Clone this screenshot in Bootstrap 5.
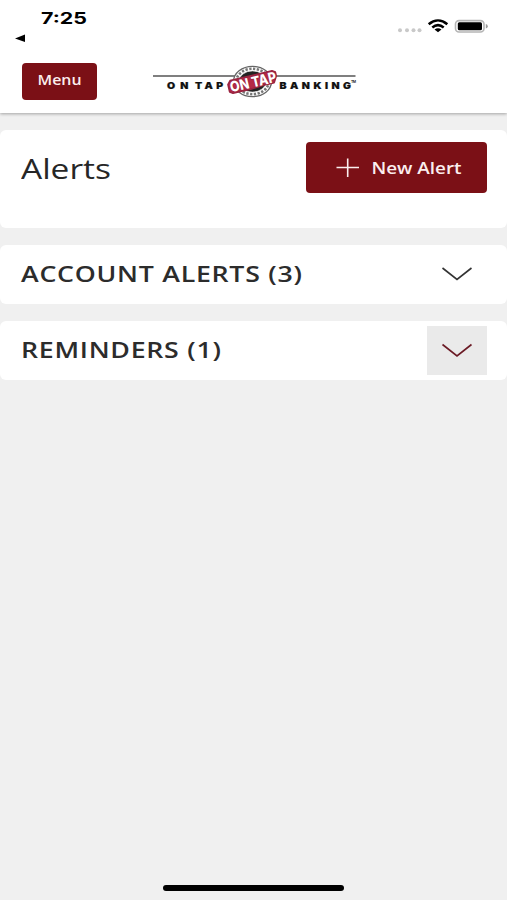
<!DOCTYPE html>
<html lang="en">
<head>
<meta charset="utf-8">
<meta name="viewport" content="width=device-width, initial-scale=1">
<title>Alerts</title>
<link href="https://cdn.jsdelivr.net/npm/bootstrap@5.3.0/dist/css/bootstrap.min.css" rel="stylesheet">
<style>
  body { background: #f0f0f0; font-family: "Open Sans", "Noto Sans", sans-serif; color: #262626; height: 900px; overflow: hidden; }
  .app-head { height: 113px; box-shadow: 0 1px 3px rgba(0,0,0,.32); }
  .status-row { height: 46px; }
  .brand-row { height: 67px; padding: 17px 22px 13px; }
  .brand-logo { margin-left: 53px; overflow: visible; }
  .main-stack { padding-top: 17px; gap: 17px; }
  .panel { border-radius: 6px; padding-left: 21px; padding-right: 20px; }
  .panel-title { height: 98px; padding-top: 12px; }
  .panel-fold { height: 59px; }
  .wide { display: inline-block; white-space: nowrap; transform-origin: 0 50%; line-height: 1; }
  .t-page { font-size: 28px; transform: scaleX(1.195); margin-top: 12px; }
  .t-sect { font-size: 22px; font-weight: 600; transform: scaleX(1.215) translateY(-2px); letter-spacing: .6px; color: #2c2c2c; }
  .btn-brand { --bs-btn-bg: #7b1016; --bs-btn-color: #fbeeee; --bs-btn-border-width: 0; --bs-btn-hover-bg: #690c12; --bs-btn-hover-color: #fff; --bs-btn-border-radius: 4px; font-weight: 600; }
  .btn-menu { width: 75px; height: 37px; }
  .btn-new { width: 181px; height: 51px; }
  .fold-btn { width: 60px; height: 49px; }
  .fold-btn.active-fold { background: #eaeaea; }
  .home-bar { width: 181px; height: 6px; border-radius: 3px; margin-bottom: 9px; }
</style>
<script src="https://cdn.jsdelivr.net/npm/bootstrap@5.3.0/dist/js/bootstrap.bundle.min.js"></script>
</head>
<body class="d-flex flex-column">
<header class="app-head bg-white flex-shrink-0">
  <div class="status-row d-flex justify-content-between">
    <svg width="110" height="46" role="img" aria-label="Time">
      <text x="41" y="23.8" font-family="Inter, sans-serif" font-weight="700" font-size="15.5" textLength="46" lengthAdjust="spacingAndGlyphs" fill="#000">7:25</text>
      <path d="M15 38.5 25 34.5V42z" fill="#000"/>
    </svg>
    <svg width="127" height="46" aria-hidden="true">
      <g fill="#c9c9c9"><circle cx="20" cy="30.3" r="2"/><circle cx="27" cy="30.3" r="2"/><circle cx="33.5" cy="30.3" r="2"/><circle cx="39.5" cy="30.3" r="2"/></g>
      <g fill="none" stroke="#000" stroke-width="2.5"><path d="M48.7 24.3C54.5 19.2 61.5 19.2 67.3 24.3"/><path d="M52.3 27.5C55.9 24.5 60.1 24.5 63.7 27.5"/></g>
      <path d="M54.5 29.5Q58 27.2 61.5 29.5L58 32.3z" fill="#000"/>
      <rect x="75.5" y="20.6" width="28.5" height="11.4" rx="3.5" fill="#fff" stroke="#b5b5b5" stroke-width="1.6"/>
      <rect x="77.8" y="22.3" width="24.2" height="7.9" rx="1.5" fill="#000"/>
      <path d="M105.8 24v4.5q2-.5 2-2.25t-2-2.25z" fill="#9b9b9b"/>
    </svg>
  </div>
  <div class="brand-row d-flex align-items-start">
    <button type="button" class="btn btn-brand btn-menu p-0">
      <svg class="d-block" width="75" height="37"><text x="15.5" y="22" font-size="13.5" textLength="44" lengthAdjust="spacingAndGlyphs" fill="currentColor">Menu</text></svg>
    </button>
    <svg class="brand-logo" width="210" height="36" viewBox="150 63 210 36" role="img" aria-label="On Tap Banking">
      <path d="M153 76H355.5" stroke="#555" stroke-width="1.7"/>
      <g font-family="Inter, sans-serif" font-weight="900" font-size="9.3" fill="#111" stroke="#111" stroke-width=".2">
        <g transform="translate(167 89) scale(1.13 1)"><text textLength="18.8">ON</text></g>
        <g transform="translate(195 89) scale(1.13 1)"><text textLength="25">TAP</text></g>
        <g transform="translate(279.5 89) scale(1.13 1)"><text textLength="63.3">BANKING</text></g>
        <text x="351" y="83" font-size="3.5" font-weight="600" textLength="5" stroke="none">TM</text>
      </g>
      <ellipse cx="252.5" cy="81.5" rx="19" ry="15.2" fill="#fff" stroke="#666" stroke-width="1.3"/>
      <ellipse cx="252.5" cy="81.5" rx="16.2" ry="12.7" fill="none" stroke="#777" stroke-width="2.6" stroke-dasharray="2.3 1.5"/>
      <ellipse cx="252.5" cy="81.5" rx="13.6" ry="10.6" fill="#222" stroke="#eee" stroke-width=".7"/>
      <g transform="rotate(-13 252.5 82)">
        <path d="M231 75.5H274L277 77.5V81.5L273.5 87.5H262L250 88.5H231L228 86.5V79z" fill="#b52846" stroke="#9a2440" stroke-width="1.6" stroke-linejoin="round"/>
        <text x="229.5" y="87.3" font-family="Inter, sans-serif" font-weight="800" font-size="14.5" textLength="47" lengthAdjust="spacingAndGlyphs" fill="#fff" stroke="#9a2440" stroke-width="1.5" paint-order="stroke">ON TAP</text>
      </g>
    </svg>
  </div>
</header>
<main class="main-stack d-flex flex-column flex-grow-1">
  <section class="panel panel-title bg-white d-flex justify-content-between align-items-start">
    <h1 class="wide t-page mb-0 fw-normal">Alerts</h1>
    <button type="button" class="btn btn-brand btn-new p-0">
      <svg class="d-block" width="181" height="51"><path d="M30.5 25.5H53M41.7 16.5V35" stroke="currentColor" stroke-width="1.6"/><text x="65.5" y="31.5" font-size="16" textLength="90" lengthAdjust="spacingAndGlyphs" fill="currentColor">New Alert</text></svg>
    </button>
  </section>
  <section class="panel panel-fold bg-white d-flex justify-content-between align-items-center">
    <h2 class="wide t-sect mb-0">ACCOUNT ALERTS (3)</h2>
    <button type="button" class="btn fold-btn border-0 rounded-0 p-0" aria-label="Expand account alerts">
      <svg class="d-block" width="60" height="49"><path d="M15.5 18 30 29.5 44.5 18" fill="none" stroke="#333" stroke-width="1.6"/></svg>
    </button>
  </section>
  <section class="panel panel-fold bg-white d-flex justify-content-between align-items-center">
    <h2 class="wide t-sect mb-0">REMINDERS (1)</h2>
    <button type="button" class="btn fold-btn active-fold border-0 rounded-0 p-0" aria-label="Expand reminders">
      <svg class="d-block" width="60" height="49"><path d="M15.5 18.5 30 30 44.5 18.5" fill="none" stroke="#6b1a25" stroke-width="1.6"/></svg>
    </button>
  </section>
</main>
<div class="home-bar bg-black mx-auto flex-shrink-0"></div>
</body>
</html>
